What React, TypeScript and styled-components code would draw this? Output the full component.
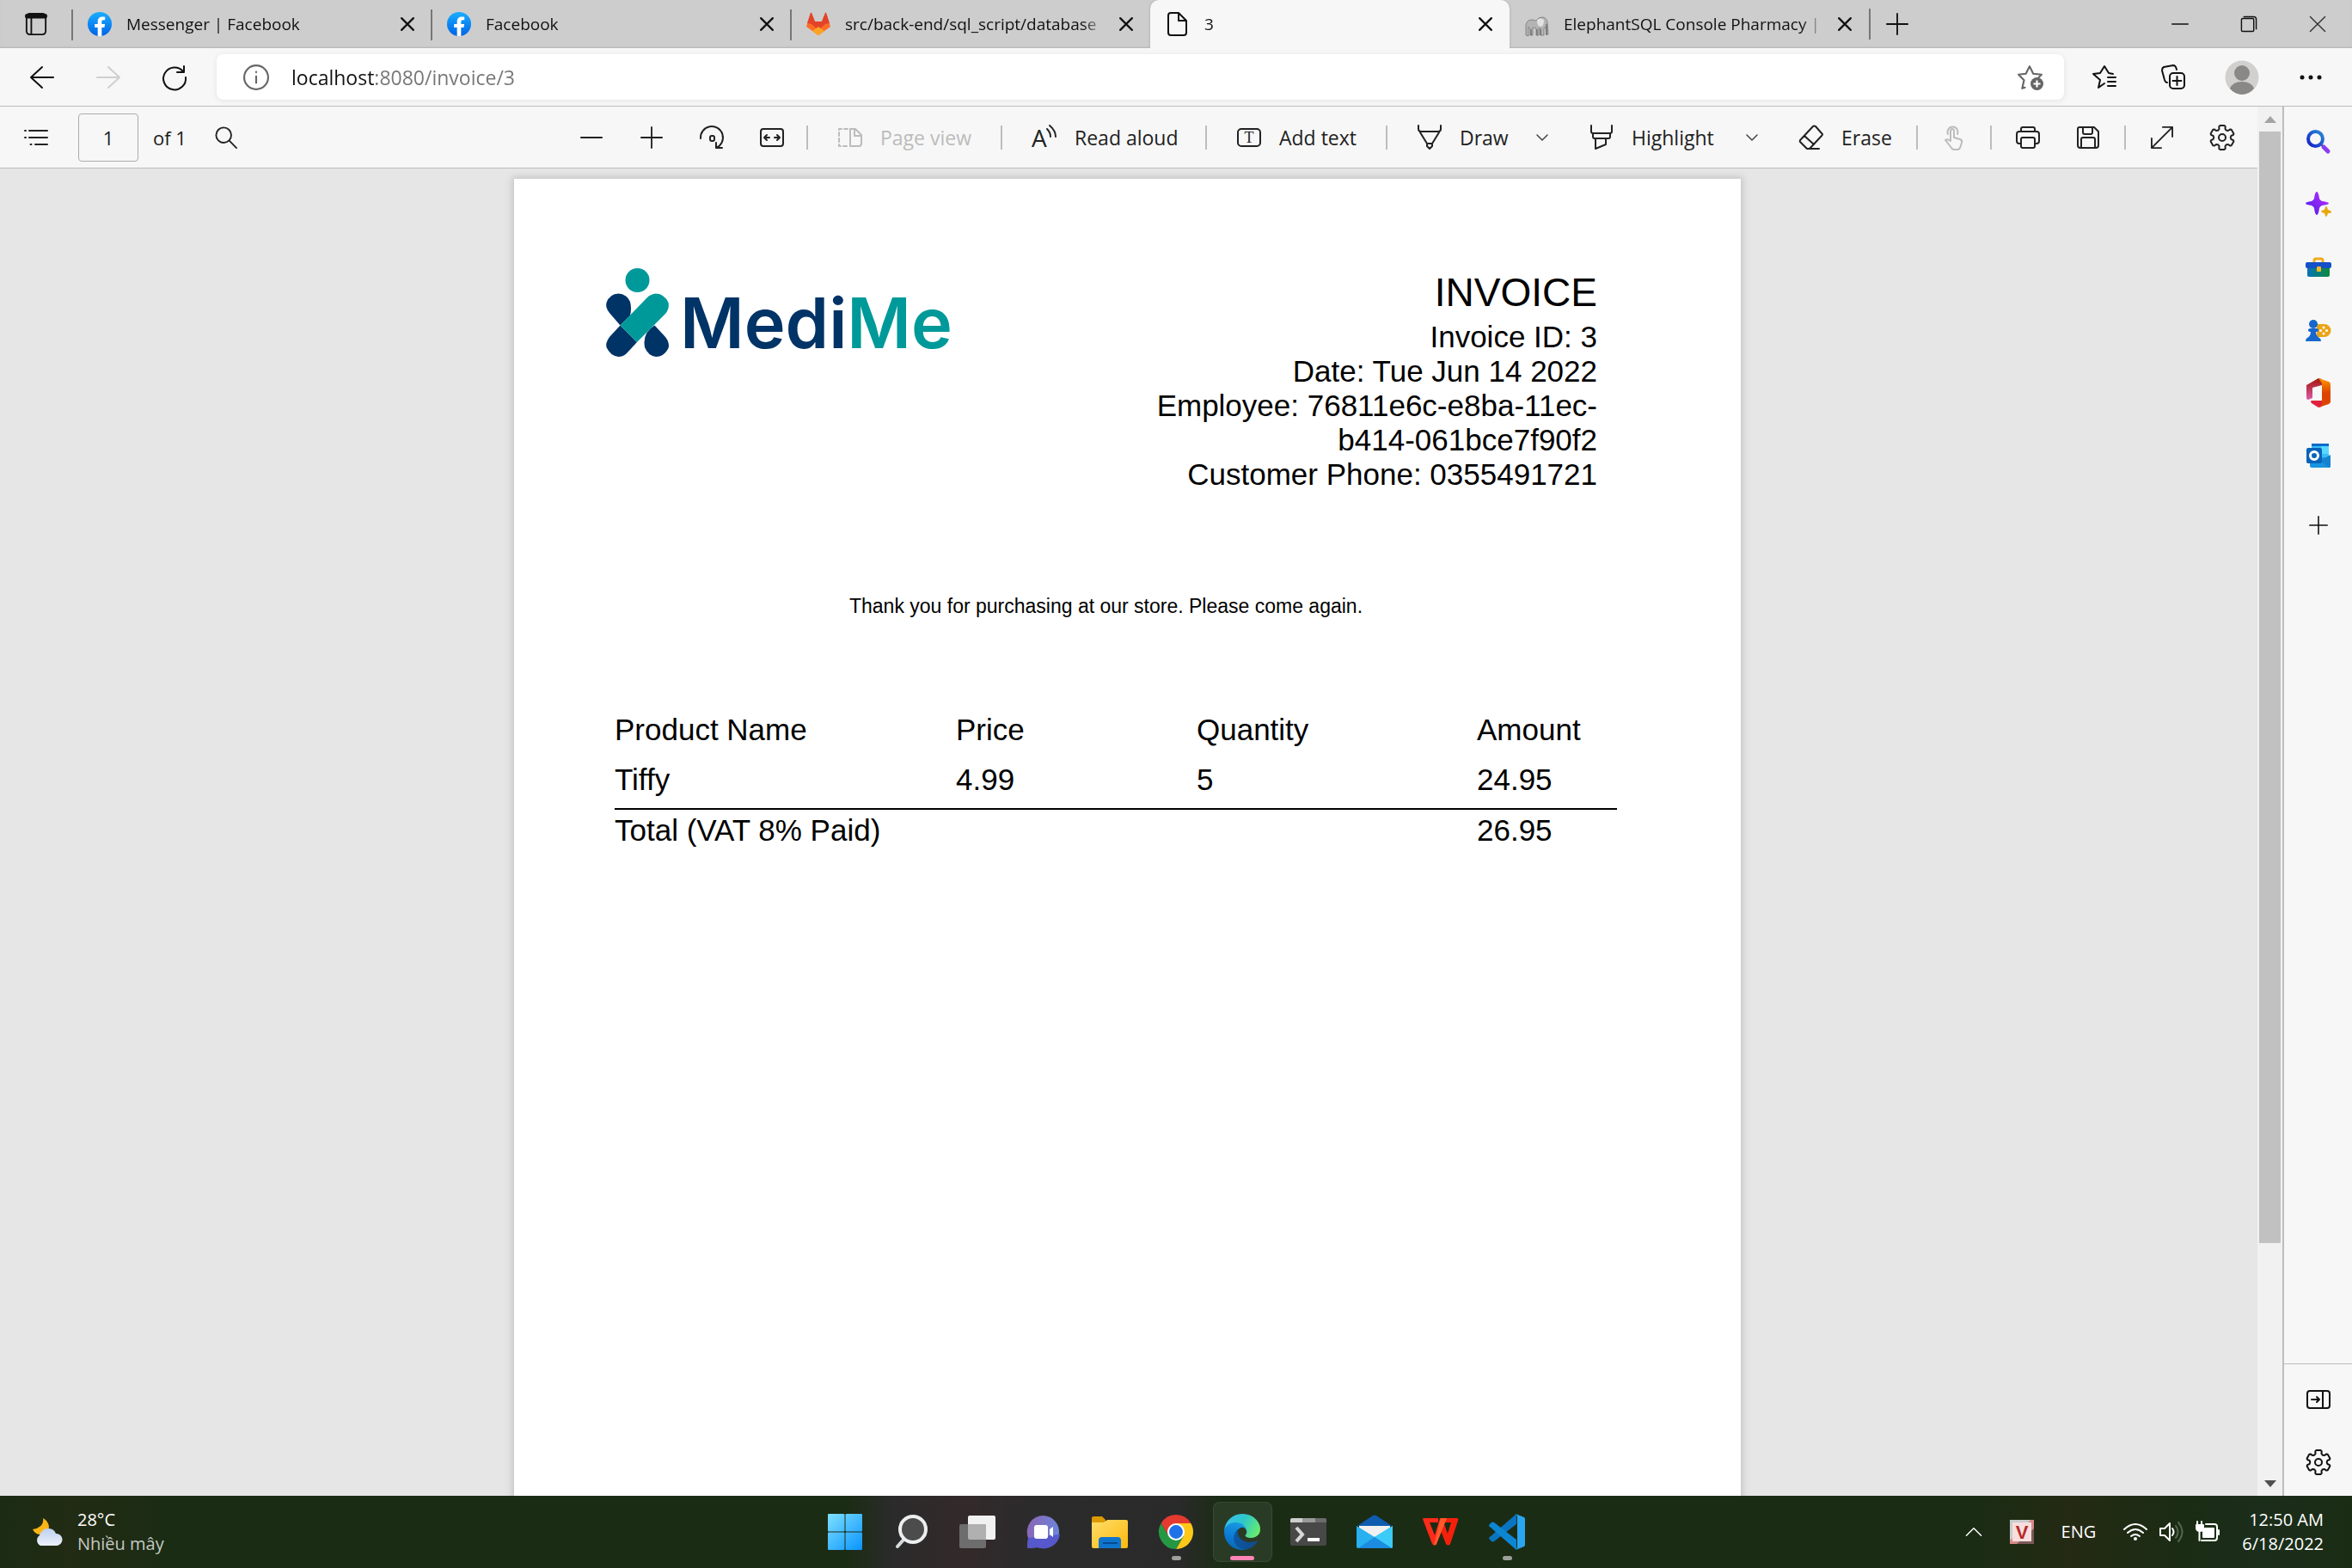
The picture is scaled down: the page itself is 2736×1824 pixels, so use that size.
import React from 'react';
import styled, { createGlobalStyle, css } from 'styled-components';

/* ---------- base ---------- */

const ui = `"Open Sans", "Noto Sans", sans-serif`;

const GlobalStyle = createGlobalStyle`
  *, *::before, *::after { box-sizing: border-box; }
  body { margin: 0; background: #e6e6e6; font-family: ${ui}; color: #1b1b1b; }
  button, input { font: inherit; color: inherit; }
`;

const Screen = styled.div`
  display: flex;
  flex-direction: column;
  height: 100vh;
  overflow: hidden;
`;

const plainButton = css`
  display: flex;
  align-items: center;
  justify-content: center;
  flex: none;
  padding: 0;
  border: 0;
  background: none;
`;

const Svg = styled.svg`
  display: block;
  flex: none;
  overflow: visible;
`;

type IconProps = {
  size?: number;
  color?: string;
  weight?: number;
  children: React.ReactNode;
};

const Line = ({ size = 28, color = '#222', weight = 2, children }: IconProps) => (
  <Svg
    width={size}
    height={size}
    viewBox="0 0 28 28"
    fill="none"
    stroke={color}
    strokeWidth={weight}
    strokeLinecap="round"
    strokeLinejoin="round"
    aria-hidden="true"
  >
    {children}
  </Svg>
);

/* ---------- tab strip ---------- */

const TabStrip = styled.header`
  display: flex;
  flex: none;
  height: 56px;
  background: #cdcdcd;
  box-shadow: inset 0 -2px 2px -1px #b2b2b2;
`;

const TabMenu = styled.button`
  ${plainButton}
  width: 84px;
`;

const TabBox = styled.div<{ $active?: boolean; $bare?: boolean }>`
  display: flex;
  align-items: center;
  flex: 0 1 418px;
  min-width: 0;
  padding: 0 20px 0 18px;
  position: relative;
  ${p =>
    p.$active
      ? css`
          background: #f7f7f7;
          border-radius: 10px 10px 0 0;
          box-shadow: 0 0 3px #a5a5a5;
          clip-path: inset(0 -4px 0 -4px);
        `
      : css`
          &::before {
            content: '';
            position: absolute;
            left: -1px;
            top: 11px;
            width: 2px;
            height: 36px;
            background: ${p.$bare ? 'transparent' : '#777'};
          }
        `}
`;

const TabLabel = styled.button`
  ${plainButton}
  flex: 1;
  min-width: 0;
  gap: 17px;
  justify-content: flex-start;
  font-size: 19px;
  line-height: 28px;
  color: #111;
`;

const TabText = styled.span`
  flex: 1;
  min-width: 0;
  overflow: hidden;
  white-space: nowrap;
  text-align: left;
  mask-image: linear-gradient(to left, transparent 0, #000 28px);
`;

const TabClose = styled.button`
  ${plainButton}
  width: 16px;
  height: 28px;
  margin-left: 15px;
`;

const NewTab = styled.button`
  ${plainButton}
  width: 64px;
  border-left: 2px solid #777;
  height: 36px;
  align-self: center;
`;

const WindowButtons = styled.div`
  display: flex;
  margin-left: auto;
`;

const WindowButton = styled.button`
  ${plainButton}
  width: 80px;
`;

const CloseIcon = () => (
  <Line size={16} color="#111" weight={4}>
    <path d="M2 2L26 26M26 2L2 26" />
  </Line>
);

const FacebookIcon = () => (
  <Svg width="28" height="28" viewBox="0 0 36 36" aria-hidden="true">
    <defs>
      <linearGradient id="fb" x1="0" y1="0" x2="0" y2="1">
        <stop offset="0" stopColor="#19aeff" />
        <stop offset="1" stopColor="#0062e6" />
      </linearGradient>
    </defs>
    <circle cx="18" cy="18" r="18" fill="url(#fb)" />
    <path
      fill="#fff"
      d="M25 23l.8-5H21v-3.500c0-1.400.5-2.500 2.700-2.500H26V7.400c-1.300-.2-2.700-.4-4-.4-4.100 0-7 2.500-7 7v4h-4.500v5H15v12.700c1 .2 2 .3 3 .3s2-.1 3-.3V23h4z"
    />
  </Svg>
);

const GitlabIcon = () => (
  <Svg width="28" height="28" viewBox="0 0 28 28" aria-hidden="true">
    <path d="M0 17L5 1q.5-1 1 0l4 10h8l4-10q.5-1 1 0l5 16-14 10z" fill="#fc6d26" />
    <path d="M5 1q.5-1 1 0l4 10h8l4-10q.5-1 1 0l4 12-5 1-8 7-8-7-5-1z" fill="#e24329" />
    <path d="M7 22l7-5 7 5-7 5.500z" fill="#fca326" />
  </Svg>
);

const PageIcon = () => (
  <Line color="#111" weight={2}>
    <path d="M6 1h9l9 9v14q0 3-3 3H6q-3 0-3-3V4q0-3 3-3zM15 1v9h9" />
  </Line>
);

const ElephantIcon = () => (
  <Svg width="28" height="28" viewBox="0 0 28 28" aria-hidden="true">
    <path
      d="M1 27V15q1-6 7-6l5 1q2-4 7-4 5 0 6 6l1 14h-2l-1-9-2 2v8h-4v-8h-2v8h-3v-8l-4-1v9H6v-7l-2-3v11z"
      fill="#b4b4b4"
      stroke="#858585"
      strokeWidth="1"
    />
    <path d="M14 9q0 8 4 8t4-8q-4-3-8 0z" fill="#e2e2e2" />
    <path d="M7 20v7M14 20v7M18 20v7M25 14v13" stroke="#5a5a5a" fill="none" />
  </Svg>
);

const tabs = [
  { title: 'Messenger | Facebook', icon: <FacebookIcon /> },
  { title: 'Facebook', icon: <FacebookIcon /> },
  { title: 'src/back-end/sql_script/database', icon: <GitlabIcon /> },
  { title: '3', icon: <PageIcon />, active: true },
  { title: 'ElephantSQL Console Pharmacy |', icon: <ElephantIcon />, bare: true },
];

/* ---------- address row ---------- */

const AddressRow = styled.nav`
  display: flex;
  align-items: center;
  flex: none;
  height: 68px;
  padding: 0 8px 0 10px;
  background: #f7f7f7;
  border-bottom: 1px solid #bdbdbd;
`;

const NavButton = styled.button<{ $wide?: boolean }>`
  ${plainButton}
  width: ${p => (p.$wide ? 80 : 77)}px;
  height: 56px;
`;

const AddressBox = styled.div`
  display: flex;
  align-items: center;
  flex: 1;
  min-width: 0;
  height: 53px;
  margin: 0 7px 0 11px;
  padding: 0 24px 0 31px;
  gap: 26px;
  border-radius: 8px;
  background: #fff;
  box-shadow: 0 1px 6px #e2e2e2;
`;

const AddressInput = styled.input`
  flex: 1;
  min-width: 0;
  height: 40px;
  padding: 0;
  border: 0;
  outline: 0;
  font-size: 23px;
  line-height: 32px;
  color: #111;
  background: linear-gradient(90deg, #111 97px, #757575 97px);
  background-clip: text;
  -webkit-background-clip: text;
  -webkit-text-fill-color: transparent;
`;

const BareButton = styled.button`
  ${plainButton}
`;

/* ---------- body ---------- */

const Body = styled.div`
  display: flex;
  flex: 1;
  min-height: 0;
`;

const Viewer = styled.section`
  display: flex;
  flex-direction: column;
  flex: 1;
  min-width: 0;
`;

const PdfBar = styled.div`
  display: flex;
  align-items: center;
  flex: none;
  height: 72px;
  padding: 0 13px 0 7px;
  background: #f7f7f7;
  border-bottom: 1px solid #bdbdbd;
`;

const ToolGroup = styled.div<{ $after?: number }>`
  display: flex;
  align-items: center;
  padding-right: ${p => p.$after ?? 0}px;
`;

const ToolsRight = styled(ToolGroup)`
  margin-left: auto;
`;

const PageInput = styled.input`
  width: 70px;
  height: 56px;
  margin: 0 17px 0 14px;
  border: 1px solid #ababab;
  border-radius: 4px;
  background: #f7f7f7;
  text-align: center;
  font-size: 22px;
`;

const PageTotal = styled.label`
  font-size: 22px;
  line-height: 32px;
  margin-right: 11px;
`;

const Tool = styled.button<{ $width?: number; $dim?: boolean }>`
  ${plainButton}
  width: ${p => p.$width ?? 70}px;
  height: 56px;
  color: ${p => (p.$dim ? '#bcbcbc' : '#222')};
`;

const LabelTool = styled(Tool)`
  justify-content: flex-start;
  padding-left: 35px;
  gap: 21px;
  font-size: 23px;
  line-height: 32px;
  white-space: nowrap;
`;

const Divider = styled.span`
  flex: none;
  width: 2px;
  height: 28px;
  background: #bdbdbd;
`;

const PaperArea = styled.main`
  flex: 1;
  min-height: 0;
  overflow: hidden;
  display: flex;
  justify-content: center;
  padding: 12px 3px 0 0;
  background: #e6e6e6;
`;

const Paper = styled.article`
  width: 1427px;
  min-height: 2020px;
  padding: 104px 143px 0 107px;
  background: #fff;
  color: #000;
  box-shadow: 0 0 8px 2px #c2c2c2;
  font-family: 'Liberation Sans', Arial, sans-serif;
  font-size: 35px;
  line-height: 40px;
`;

const PaperHead = styled.div`
  display: flex;
  justify-content: space-between;
  padding-right: 24px;
`;

const Brand = styled.div`
  display: flex;
  align-items: flex-start;
  gap: 12px;
`;

const BrandName = styled.div`
  padding-top: 14px;
  font-family: Inter, sans-serif;
  font-size: 81px;
  font-weight: 600;
  line-height: 100px;
  color: #003366;
`;

const BrandAccent = styled.span`
  color: #009999;
`;

const Details = styled.div`
  width: 560px;
  padding-top: 1px;
  text-align: right;
`;

const Title = styled.h1`
  margin: 0 0 5px;
  font-size: 46px;
  line-height: 54px;
  font-weight: 400;
`;

const Detail = styled.p`
  margin: 0;
`;

const Thanks = styled.p`
  margin: 120px 24px 111px 10px;
  font-size: 23px;
  line-height: 26px;
  text-align: center;
`;

const Items = styled.table`
  width: 1166px;
  margin-left: 10px;
  border-collapse: collapse;
  table-layout: fixed;

  th,
  td {
    padding: 0 0 18px;
    font-weight: 400;
    text-align: left;
    white-space: nowrap;
  }
  tbody td {
    padding-bottom: 13px;
    border-bottom: 2px solid #000;
  }
  tfoot td {
    padding-top: 4px;
  }
`;

const Col = styled.col<{ $width: number }>`
  width: ${p => p.$width}px;
`;

/* ---------- scrollbar and side bar ---------- */

const ScrollTrack = styled.div`
  display: flex;
  flex-direction: column;
  align-items: center;
  flex: none;
  width: 29px;
  background: #f1f1f1;
`;

const ScrollArrow = styled.button`
  ${plainButton}
  width: 29px;
  height: 29px;
`;

const ScrollSpace = styled.div`
  flex: 1;
  width: 25px;
`;

const ScrollThumb = styled.div`
  width: 25px;
  height: 83%;
  background: #c1c1c1;
`;

const SideBar = styled.aside`
  display: flex;
  flex-direction: column;
  flex: none;
  width: 81px;
  padding-top: 4px;
  border-left: 2px solid #bdbdbd;
  background: #f7f7f7;
`;

const SideButton = styled.button<{ $add?: boolean }>`
  ${plainButton}
  height: 73px;
  margin-top: ${p => (p.$add ? 8 : 0)}px;
`;

const SideFoot = styled.div`
  display: flex;
  flex-direction: column;
  margin-top: auto;
  padding: 4px 0 3px;
  border-top: 1px solid #bdbdbd;
`;

/* ---------- taskbar ---------- */

const TaskBar = styled.footer`
  display: grid;
  grid-template-columns: 1fr auto 1fr;
  align-items: center;
  flex: none;
  height: 84px;
  color: #fff;
  font-size: 20px;
  line-height: 28px;
  background: linear-gradient(
    90deg,
    #1b2c14 0,
    #222b14 3%,
    #1b2c14 7%,
    #1b2c14 36%,
    #2b2b2b 38%,
    #33292a 41%,
    #2b2b2c 44%,
    #2a2a2b 50%,
    #1b2c14 52%,
    #1b2c14 84%,
    #242a14 88%,
    #1b2c14 93%,
    #1b2e1b 96%,
    #1b2c14 100%
  );
`;

const Weather = styled.button`
  ${plainButton}
  justify-self: start;
  padding-left: 36px;
  gap: 16px;
  text-align: left;
`;

const Stack = styled.span`
  display: flex;
  flex-direction: column;
`;

const Muted = styled.span`
  color: #c4c9c2;
`;

const Apps = styled.div`
  display: flex;
  gap: 8px;
`;

const AppButton = styled.button<{ $state?: 'open' | 'active' }>`
  ${plainButton}
  position: relative;
  width: 69px;
  height: 70px;
  border-radius: 8px;
  ${p =>
    p.$state === 'active' &&
    css`
      background: #2a3b25;
      box-shadow: inset 0 0 0 1px #384833;
    `}
  ${p =>
    p.$state &&
    css`
      &::after {
        content: '';
        position: absolute;
        bottom: 2px;
        width: ${p.$state === 'active' ? 28 : 11}px;
        height: 5px;
        border-radius: 3px;
        background: ${p.$state === 'active' ? '#ff85b5' : '#9c9f9a'};
      }
    `}
`;

const Tray = styled.div`
  display: flex;
  align-items: center;
  justify-self: end;
  padding-right: 33px;
`;

const TrayButton = styled.button<{ $gap?: number }>`
  ${plainButton}
  margin-right: ${p => p.$gap ?? 14}px;
`;

const Clock = styled.time`
  display: flex;
  flex-direction: column;
  text-align: right;
  margin-left: 12px;
`;

/* ---------- drawings ---------- */

const gearPath = (() => {
  const pts: string[] = [];
  for (let k = 0; k < 6; k++) {
    const base = k * 60 - 90;
    [[-27, 9.8], [-19, 10.6], [-16, 13.4], [-11, 14.2], [11, 14.2], [16, 13.4], [19, 10.6], [27, 9.8]].forEach(([a, r]) => {
      const t = ((base + a) * Math.PI) / 180;
      pts.push(`${(14 + r * Math.cos(t)).toFixed(1)} ${(14 + r * Math.sin(t)).toFixed(1)}`);
    });
  }
  return `M${pts.join('L')}Z`;
})();

const Gear = ({ color = '#222' }: { color?: string }) => (
  <Line color={color}>
    <path d={gearPath} />
    <circle cx="14" cy="14" r="4" />
  </Line>
);

const Chevron = ({ color = '#444' }: { color?: string }) => (
  <Line size={14} color={color} weight={3}>
    <path d="M2 8l12 12L26 8" />
  </Line>
);

const BrandMark = () => (
  <Svg width="74" height="104" viewBox="0 0 74 104" aria-hidden="true">
    <circle cx="36.500" cy="14" r="14" fill="#099" />
    <path d="M16.500 66.500L4 52Q-1 46 0.500 40Q4 30 14.500 29.500Q24 30 28 39Q30 47 28 55Z" fill="#036" />
    <path d="M56.500 66.500L69 80Q75 88 72 94Q67 103 58 103Q49 102 45 92Q42 75 56.500 66.500Z" fill="#036" />
    <path d="M16.500 66.500L4 80Q-1 87 0.500 92Q5 102 14.500 103Q20 103 24 99L36 86Z" fill="#036" />
    <path d="M16.500 66.500L48 34Q52 30 58 29.500Q68 30 72.500 40Q74 47 69 53L36 86Z" fill="#099" />
  </Svg>
);

const SearchColor = () => (
  <Svg width="28" height="28" viewBox="0 0 28 28" aria-hidden="true">
    <defs>
      <linearGradient id="se" x1="1" y1="0" x2="0" y2="1">
        <stop offset="0" stopColor="#2a8ad8" />
        <stop offset="1" stopColor="#1420c8" />
      </linearGradient>
    </defs>
    <path d="M16.500 16.500l4 4" stroke="#444" strokeWidth="2" />
    <circle cx="10.500" cy="10.500" r="8.500" fill="none" stroke="url(#se)" strokeWidth="4" />
    <path d="M20 20l5 5" stroke="#8a3cf0" strokeWidth="5" strokeLinecap="round" />
  </Svg>
);

const Sparkle = () => (
  <Svg width="30" height="30" viewBox="0 0 30 30" aria-hidden="true">
    <defs>
      <linearGradient id="sp" x1="0" y1="1" x2="1" y2="0">
        <stop offset="0" stopColor="#4a1ce8" />
        <stop offset="1" stopColor="#c030ff" />
      </linearGradient>
    </defs>
    <path d="M13 0q2 0 3 8 1 2 3 3 8 1 8 2.500T19 16q-2 1-3 3-1 8-3 8t-3-8q-1-2-3-3-7-1-7-2.500T7 11q2-1 3-3 1-8 3-8z" fill="url(#sp)" />
    <path d="M24 17q1 0 2 4 4 1 4 2.500T26 25q-1 4-2 4t-2-4q-4-1-4-2t4-2q1-4 2-4z" fill="#e8a80c" />
  </Svg>
);

const Toolbox = () => (
  <Svg width="30" height="30" viewBox="0 0 30 30" aria-hidden="true">
    <defs>
      <linearGradient id="tb" x1="0" y1="0" x2="1" y2="0">
        <stop offset="0" stopColor="#0a72b8" />
        <stop offset="1" stopColor="#0b8a3c" />
      </linearGradient>
    </defs>
    <path d="M10 10V7q0-2 2-2h6q2 0 2 2v3" fill="none" stroke="#efaa1c" strokeWidth="3" />
    <path d="M2 14h26v10q0 2-2 2H4q-2 0-2-2z" fill="url(#tb)" />
    <rect y="9" width="30" height="7" rx="2" fill="#1450c8" />
    <rect x="13" y="14" width="5" height="6" rx="1" fill="#f5b822" />
  </Svg>
);

const Games = () => (
  <Svg width="30" height="30" viewBox="0 0 30 30" aria-hidden="true">
    <path d="M13 8h9a7 7 0 0 1 0 15h-9z" fill="#eaa416" />
    <g fill="#fff">
      <circle cx="21" cy="12" r="1.500" />
      <circle cx="21" cy="19" r="1.500" />
      <circle cx="17.500" cy="15.500" r="1.500" />
      <circle cx="24.500" cy="15.500" r="1.500" />
    </g>
    <circle cx="9" cy="8" r="5" fill="#1767cc" />
    <path d="M6 13h6q3 0 3 2t-3 2q0 5 4 7 2 1 2 4H0q0-3 2-4 4-2 4-7-3 0-3-2t3-2z" fill="#1767cc" />
  </Svg>
);

const Office = () => (
  <Svg width="30" height="34" viewBox="0 0 30 34" aria-hidden="true">
    <defs>
      <linearGradient id="of" x1="0" y1="0" x2="0" y2="1">
        <stop offset="0" stopColor="#a3140c" />
        <stop offset="1" stopColor="#e05aa8" />
      </linearGradient>
      <linearGradient id="og" x1="0" y1="0" x2="0" y2="1">
        <stop offset="0" stopColor="#ff9a00" />
        <stop offset="0.500" stopColor="#dc4400" />
      </linearGradient>
    </defs>
    <path d="M1 8L15 0l4 1v7L8 11v12l-5 2q-2 0-2-3z" fill="url(#of)" />
    <path d="M7 26h12v7l-4 1-8-5q-2-2 0-3z" fill="#e0203c" />
    <path d="M15 0l12 4q2 1 2 3v20q0 2-2 3l-12 4 4-4V6z" fill="url(#og)" />
  </Svg>
);

const Outlook = () => (
  <Svg width="30" height="30" viewBox="0 0 30 30" aria-hidden="true">
    <path d="M7 1h20v18H7z" fill="#38bdf5" />
    <path d="M7 1h20v3H7z" fill="#0a6cc8" />
    <path d="M18 4h9v9h-9z" fill="#57d8ff" />
    <path d="M5 17h24v10q0 2-2 2H7q-2 0-2-2z" fill="#1a94e0" />
    <path d="M29 14v13q0 2-2 2L17 21z" fill="#1482d0" />
    <rect x="1" y="6" width="18" height="18" rx="2" fill="#0a63b8" />
    <circle cx="10" cy="15" r="4.500" fill="none" stroke="#fff" strokeWidth="3" />
  </Svg>
);

const Plus = ({ size = 24, color = '#111', weight = 2 }) => (
  <Line size={size} color={color} weight={weight}>
    <path d="M14 1v26M1 14h26" />
  </Line>
);

const WindowsIcon = () => (
  <Svg width="40" height="42" viewBox="0 0 40 42" aria-hidden="true">
    <defs>
      <linearGradient id="wi" gradientUnits="userSpaceOnUse" x1="0" y1="0" x2="40" y2="42">
        <stop offset="0" stopColor="#7fe0ff" />
        <stop offset="1" stopColor="#0894ff" />
      </linearGradient>
    </defs>
    <g fill="url(#wi)">
      <rect width="19.500" height="20.500" rx="1" />
      <rect x="20.500" width="19.500" height="20.500" rx="1" />
      <rect y="21.500" width="19.500" height="20.500" rx="1" />
      <rect x="20.500" y="21.500" width="19.500" height="20.500" rx="1" />
    </g>
  </Svg>
);

const TaskSearch = () => (
  <Svg width="40" height="40" viewBox="0 0 40 40" aria-hidden="true">
    <path d="M12 28L4 37" stroke="#d5dade" strokeWidth="4" strokeLinecap="round" />
    <circle cx="22" cy="17" r="15" fill="#555" fillOpacity="0.800" stroke="#eceef0" strokeWidth="4" />
  </Svg>
);

const TaskView = () => (
  <Svg width="42" height="40" viewBox="0 0 42 40" aria-hidden="true">
    <rect x="10" y="1" width="32" height="28" rx="2" fill="#f1f1f1" />
    <rect y="11" width="31" height="28" rx="2" fill="#6d6d6d" />
    <path d="M10 11h20q1 0 1 1v17H12q-2 0-2-2z" fill="#b0b0b0" />
  </Svg>
);

const Chat = () => (
  <Svg width="40" height="40" viewBox="0 0 40 40" aria-hidden="true">
    <defs>
      <linearGradient id="ch" x1="0" y1="0.300" x2="1" y2="0.500">
        <stop offset="0" stopColor="#8c66b4" />
        <stop offset="1" stopColor="#6a86dc" />
      </linearGradient>
    </defs>
    <path d="M20 1a19 19 0 1 1-7 37l-10 1q-2 0-2-2l1-10A19 19 0 0 1 20 1z" fill="url(#ch)" />
    <path d="M2 27l37-4A19 19 0 0 1 13 38L3 39q-2 0-2-2z" fill="#5658cc" />
    <rect x="9" y="12" width="16" height="16" rx="3" fill="#fff" />
    <path d="M27 17l4-3v12l-4-3z" fill="#fff" />
  </Svg>
);

const Explorer = () => (
  <Svg width="42" height="40" viewBox="0 0 42 40" aria-hidden="true">
    <defs>
      <linearGradient id="ex" x1="0" y1="0" x2="1" y2="1">
        <stop offset="0" stopColor="#ffdd6b" />
        <stop offset="1" stopColor="#fcba0c" />
      </linearGradient>
    </defs>
    <path d="M0 4q0-2 2-2h10l4 4v8H0z" fill="#dd9a00" />
    <path d="M0 9h14l4-3h22q2 0 2 2v29q0 2-2 2H2q-2 0-2-2z" fill="url(#ex)" />
    <path d="M8 39V30q0-4 4-4h18q4 0 4 4v9z" fill="#0f74cc" />
    <path d="M13 33h17" stroke="#074a90" strokeWidth="2" />
  </Svg>
);

const Chrome = () => (
  <Svg width="40" height="40" viewBox="0 0 48 48" aria-hidden="true">
    <path d="M13.600 30L3.210 12A24 24 0 0 1 44.780 12H24z" fill="#e53a30" />
    <path d="M24 12h20.780A24 24 0 0 1 24 48l10.390-18z" fill="#fdc818" />
    <path d="M34.390 30L24 48A24 24 0 0 1 3.210 12L13.600 30z" fill="#269844" />
    <circle cx="24" cy="24" r="12" fill="#fff" />
    <circle cx="24" cy="24" r="9.500" fill="#1f72e8" />
  </Svg>
);

const Edge = () => (
  <Svg width="42" height="42" viewBox="0 0 256 256" aria-hidden="true">
    <defs>
      <linearGradient id="e1" x1="0" y1="0" x2="1" y2="0">
        <stop offset="0" stopColor="#0c59a4" />
        <stop offset="1" stopColor="#114a8b" />
      </linearGradient>
      <linearGradient id="e2" x1="0.600" y1="0" x2="0.300" y2="1">
        <stop offset="0" stopColor="#1b9de2" />
        <stop offset="0.600" stopColor="#0a7ad4" />
        <stop offset="1" stopColor="#0667ae" />
      </linearGradient>
      <linearGradient id="e3" x1="0" y1="0.200" x2="1" y2="0.600">
        <stop offset="0" stopColor="#35c1f1" />
        <stop offset="0.500" stopColor="#2ec7c8" />
        <stop offset="1" stopColor="#66eb6e" />
      </linearGradient>
    </defs>
    <path fill="url(#e1)" d="M231 190.500c-3.400 1.800-6.900 3.400-10.500 4.700a101.800 101.800 0 0 1-35.900 6.500c-47.300 0-88.500-32.500-88.500-74.300 0-11.300 6.300-21.800 16.200-27.400-42.800 1.800-53.800 46.400-53.800 72.500 0 73.900 68.100 81.400 82.800 81.400 7.900 0 19.800-2.300 27-4.600l1.300-.4a128.300 128.300 0 0 0 66.600-52.800 4 4 0 0 0-5.300-5.600z" />
    <path fill="url(#e2)" d="M105.700 241.400a79.200 79.200 0 0 1-22.700-21.300 80.700 80.700 0 0 1 29.500-120c3.200-1.500 8.500-4.100 15.600-4a32.400 32.400 0 0 1 25.700 13 31.900 31.900 0 0 1 6.300 18.700c0-.2 24.500-79.600-80-79.600-43.900 0-80 41.700-80 78.200a130.200 130.200 0 0 0 12.100 56 128 128 0 0 0 156.400 67 75.500 75.500 0 0 1-62.800-8z" />
    <path fill="url(#e3)" d="M152.300 148.900c-.8 1-3.300 2.500-3.300 5.700 0 2.600 1.700 5.100 4.700 7.200 14.400 10 41.500 8.700 41.600 8.700a59.600 59.600 0 0 0 30.300-8.300 61.400 61.400 0 0 0 30.400-52.900c.3-22.400-8-37.300-11.300-43.900C223.500 23.900 177.700 0 128 0A128 128 0 0 0 0 126.200c.5-36.500 36.800-66 80-66 3.500 0 23.500.3 42 10.100 16.300 8.600 24.900 18.900 30.800 29.200 6.200 10.700 7.300 24.100 7.300 29.500s-2.700 13.300-7.800 19.900z" />
  </Svg>
);

const Terminal = () => (
  <Svg width="42" height="34" viewBox="0 0 42 34" aria-hidden="true">
    <rect y="1" width="42" height="32" rx="2" fill="#484848" />
    <path d="M0 6V3q0-2 2-2h12v5z" fill="#cfcfcf" />
    <path d="M14 1h15v5H14z" fill="#999" />
    <path d="M29 1h11q2 0 2 2v3H29z" fill="#6c6c6c" />
    <path d="M7 12l7 8-7 8" fill="none" stroke="#d8d8d8" strokeWidth="4" />
    <rect x="20" y="24" width="14" height="4" fill="#fff" />
  </Svg>
);

const Mail = () => (
  <Svg width="42" height="40" viewBox="0 0 42 40" aria-hidden="true">
    <path d="M1 13L19 1q2-1 4 0l18 12z" fill="#0d5cb0" />
    <path d="M3 13h36v17H3z" fill="#f0f0f0" />
    <path d="M0 13l21 13 21-13v24q0 2-2 2H2q-2 0-2-2z" fill="#28b0f0" />
    <path d="M21 26l21-13v24q0 1-1 2z" fill="#3ccbf8" />
    <path d="M21 26l20 13H2z" fill="#1c8ce0" />
  </Svg>
);

const Wps = () => (
  <Svg width="42" height="34" viewBox="0 0 42 34" aria-hidden="true">
    <path d="M0 2q0-1 2-1h16v5H8l6 15 6-20h8L16 31q-2 3-5 0z" fill="#ff2a1a" />
    <path d="M24 1h16q2 0 1 3l-9 27q-2 3-5 0l-7-18 4-8 5 14 4-13h-9z" fill="#f5200c" />
    <path d="M21 1h7L16 31q-1 2-3 1z" fill="#ff5a2c" />
  </Svg>
);

const Code = () => (
  <Svg width="42" height="42" viewBox="0 0 42 42" aria-hidden="true">
    <path d="M32 0v12L6 32q-1 1-3 0l-2-2q-2-2 0-3z" fill="#0a74c0" />
    <path d="M32 42V30L6 10q-1-1-3 0l-2 2q-2 2 0 3z" fill="#0c86d2" />
    <path d="M31 0l10 4q1 1 1 2v30q0 1-1 2l-10 4q2-1 2-4V4q0-3-2-4z" fill="#2aa5f0" />
  </Svg>
);

const Moon = () => (
  <Svg width="38" height="34" viewBox="0 0 38 34" aria-hidden="true">
    <defs>
      <linearGradient id="cl" x1="0" y1="0" x2="0" y2="1">
        <stop offset="0" stopColor="#bdd0f2" />
        <stop offset="1" stopColor="#eef0f8" />
      </linearGradient>
    </defs>
    <path d="M14 1q2 11-12 13 3 6 9 6 9 0 10-9Q20 4 14 1z" fill="#fbb515" />
    <path d="M11 33a7 7 0 0 1-1-12q3-8 10-8 7 0 9 6a7 7 0 0 1 1 14z" fill="url(#cl)" />
  </Svg>
);

const trayWhite = '#fff';

/* ---------- page ---------- */

export default function App() {
  return (
    <Screen>
      <GlobalStyle />

      <TabStrip>
        <TabMenu aria-label="Tab actions menu">
          <Line size={26} color="#111">
            <rect x="2" y="1" width="24" height="26" rx="4" />
            <path d="M3 4h22" strokeWidth="6" />
            <path d="M8 7v20" />
          </Line>
        </TabMenu>
        {tabs.map((t, i) => (
          <TabBox key={i} $active={t.active} $bare={t.bare}>
            <TabLabel>
              {t.icon}
              <TabText>{t.title}</TabText>
            </TabLabel>
            <TabClose aria-label="Close tab">
              <CloseIcon />
            </TabClose>
          </TabBox>
        ))}
        <NewTab aria-label="New tab">
          <Plus size={26} />
        </NewTab>
        <WindowButtons>
          <WindowButton aria-label="Minimize">
            <Line size={20} color="#111">
              <path d="M1 14h26" />
            </Line>
          </WindowButton>
          <WindowButton aria-label="Restore">
            <Line size={20} color="#111">
              <rect x="2" y="5" width="20" height="21" rx="2" />
              <path d="M6 2h16q4 0 4 4v16" />
            </Line>
          </WindowButton>
          <WindowButton aria-label="Close">
            <Line size={20} color="#333">
              <path d="M2 2l24 24M26 2L2 26" />
            </Line>
          </WindowButton>
        </WindowButtons>
      </TabStrip>

      <AddressRow>
        <NavButton aria-label="Back">
          <Line color="#111">
            <path d="M1 14h26M14 2L1 14l13 12" />
          </Line>
        </NavButton>
        <NavButton aria-label="Forward">
          <Line color="#cfcfcf">
            <path d="M1 14h26M14 2l13 12-13 12" />
          </Line>
        </NavButton>
        <NavButton aria-label="Refresh">
          <Line color="#111">
            <path d="M24 7A13 13 0 1 0 27 14M25 1v7h-8" />
          </Line>
        </NavButton>
        <AddressBox>
          <BareButton aria-label="Site information">
            <Line size={30} color="#666">
              <circle cx="14" cy="14" r="13" />
              <path d="M14 13v7M14 8v.5" />
            </Line>
          </BareButton>
          <AddressInput aria-label="Address" defaultValue="localhost:8080/invoice/3" />
          <BareButton aria-label="Add to favorites">
            <Line size={30} color="#666">
              <path d="M8 25l-3 1 2-9-6-6 8-1 4-8 4 8 9 1-3 3" />
              <circle cx="21" cy="21" r="7" fill="#666" stroke="none" />
              <path d="M21 18v6M18 21h6" stroke="#fff" />
            </Line>
          </BareButton>
        </AddressBox>
        <NavButton $wide aria-label="Favorites">
          <Line color="#111">
            <path d="M14 21l-7 5 2-9-8-7 8-1 5-8 5 8 5 1M18 14h9M18 19h9M18 24h9" />
          </Line>
        </NavButton>
        <NavButton $wide aria-label="Collections">
          <Line color="#111">
            <path d="M7 20q-2 0-3-3L1 6q0-3 2-4l11-2q3 0 4 5" />
            <rect x="10" y="9" width="17" height="18" rx="4" />
            <path d="M18.500 13v10M13.500 18h10" />
          </Line>
        </NavButton>
        <NavButton $wide aria-label="Profile">
          <Svg width="40" height="40" viewBox="0 0 40 40" aria-hidden="true">
            <circle cx="20" cy="20" r="19.500" fill="#d2d0ce" />
            <circle cx="20" cy="15" r="9" fill="#8a8886" />
            <path d="M6 33q3-8 14-8t14 8q-6 7-14 7T6 33z" fill="#8a8886" />
          </Svg>
        </NavButton>
        <NavButton $wide aria-label="Settings and more">
          <Line color="#111">
            <g fill="#111" stroke="none">
              <circle cx="4" cy="14" r="2.500" />
              <circle cx="14" cy="14" r="2.500" />
              <circle cx="24" cy="14" r="2.500" />
            </g>
          </Line>
        </NavButton>
      </AddressRow>

      <Body>
        <Viewer>
          <PdfBar>
            <ToolGroup>
              <Tool aria-label="Table of contents">
                <Line>
                  <path d="M6 6h21M6 14h21M13 22h14M1 6h1M1 14h1M7.500 22h1" />
                </Line>
              </Tool>
              <PageInput id="page" defaultValue="1" />
              <PageTotal htmlFor="page">of 1</PageTotal>
              <Tool aria-label="Find">
                <Line size={26}>
                  <circle cx="11" cy="11" r="9.500" />
                  <path d="M18 18l9 9" />
                </Line>
              </Tool>
            </ToolGroup>

            <ToolsRight>
              <ToolGroup $after={5}>
                <Tool aria-label="Zoom out">
                  <Line size={26}>
                    <path d="M1 14h26" />
                  </Line>
                </Tool>
                <Tool aria-label="Zoom in">
                  <Plus size={26} color="#222" />
                </Tool>
                <Tool aria-label="Rotate">
                  <Line>
                    <path d="M1 15A13 13 0 1 1 19 26M26 26h-7v-6" />
                    <rect x="12" y="12" width="5" height="6" rx="2" />
                  </Line>
                </Tool>
                <Tool aria-label="Fit to width">
                  <Line>
                    <rect x="1" y="4" width="26" height="20" rx="3" />
                    <path d="M11 14H5M8 11l-3 3 3 3M17 14h6M20 11l3 3-3 3" />
                  </Line>
                </Tool>
              </ToolGroup>
              <Divider />
              <LabelTool $width={224} $dim disabled>
                <Line color="#bcbcbc">
                  <path d="M11 4H1v20h10" strokeDasharray="4 3" />
                  <path d="M14 4h6l7 7v10q0 3-3 3H14zM19 4v8h8" />
                </Line>
                Page view
              </LabelTool>
              <Divider />
              <LabelTool $width={236}>
                <Line>
                  <text x="-1" y="25" fontFamily="Open Sans" fontSize="28" fill="#222" stroke="none">
                    A
                  </text>
                  <path d="M17 4q4 4 4 9M20 0q7 6 7 13" />
                </Line>
                Read aloud
              </LabelTool>
              <Divider />
              <LabelTool $width={208}>
                <Line>
                  <rect x="1" y="4" width="26" height="20" rx="4" />
                  <text x="14" y="20" textAnchor="middle" fontFamily="Liberation Serif" fontSize="18" fill="#222" stroke="none">
                    T
                  </text>
                </Line>
                Add text
              </LabelTool>
              <Divider />
              <LabelTool $width={160}>
                <Line>
                  <path d="M1 0v4q0 3 3 3h20q3 0 3-3V0M3 8l8 13h6l8-13M11 21v3l3 3 3-3v-3" />
                </Line>
                Draw
              </LabelTool>
              <Tool $width={40} aria-label="Draw options">
                <Chevron />
              </Tool>
              <LabelTool $width={204}>
                <Line>
                  <path d="M2 0v7q0 2 2 2h20q2 0 2-2V0M4 9v4q0 2 2 2h16q2 0 2-2V9M7 15v12l12-5v-7" />
                </Line>
                Highlight
              </LabelTool>
              <Tool $width={40} aria-label="Highlight options">
                <Chevron />
              </Tool>
              <LabelTool $width={171}>
                <Line>
                  <path d="M2 16L16 1q1-1 3 0l7 8q2 1 0 3L12 27H9l-8-8q-1-1 1-3zM6 12l11 10M11 27h12" />
                </Line>
                Erase
              </LabelTool>
              <Divider />
              <Tool $width={84} $dim disabled aria-label="Touch">
                <Line color="#bcbcbc">
                  <path d="M10 18V7q0-3 2-3t2 3v7l7 2q3 1 2 4l-2 6q-1 2-3 2h-4q-2 0-3-2l-7-9q2-2 6 1" />
                  <path d="M7 10a6 6 0 1 1 11 0" />
                </Line>
              </Tool>
              <Divider />
              <ToolGroup $after={14}>
                <Tool $width={84} aria-label="Print">
                  <Line>
                    <path d="M6 21H4q-3 0-3-3v-8q0-3 3-3h20q3 0 3 3v8q0 3-3 3h-2M6 7V4q0-2 2-2h12q2 0 2 2v3" />
                    <rect x="6" y="14" width="16" height="12" rx="2" />
                  </Line>
                </Tool>
                <Tool $width={56} aria-label="Save">
                  <Line>
                    <path d="M4 2h17l5 5v16q0 3-3 3H5q-3 0-3-3V4q0-2 2-2zM8 2v6q0 2 2 2h7q2 0 2-2V2M6 26V16q0-2 2-2h12q2 0 2 2v10" />
                  </Line>
                </Tool>
              </ToolGroup>
              <Divider />
              <Tool $width={84} aria-label="Full screen">
                <Line size={26}>
                  <path d="M2 26L26 2M15 1h12v12M1 15v12h12" />
                </Line>
              </Tool>
              <Tool $width={56} aria-label="Viewer settings">
                <Gear />
              </Tool>
            </ToolsRight>
          </PdfBar>

          <PaperArea>
            <Paper>
              <PaperHead>
                <Brand>
                  <BrandMark />
                  <BrandName>
                    Medi<BrandAccent>Me</BrandAccent>
                  </BrandName>
                </Brand>
                <Details>
                  <Title>INVOICE</Title>
                  <Detail>Invoice ID: 3</Detail>
                  <Detail>Date: Tue Jun 14 2022</Detail>
                  <Detail>Employee: 76811e6c-e8ba-11ec-b414-061bce7f90f2</Detail>
                  <Detail>Customer Phone: 0355491721</Detail>
                </Details>
              </PaperHead>
              <Thanks>Thank you for purchasing at our store. Please come again.</Thanks>
              <Items>
                <colgroup>
                  <Col $width={397} />
                  <Col $width={280} />
                  <Col $width={326} />
                  <Col $width={163} />
                </colgroup>
                <thead>
                  <tr>
                    <th>Product Name</th>
                    <th>Price</th>
                    <th>Quantity</th>
                    <th>Amount</th>
                  </tr>
                </thead>
                <tbody>
                  <tr>
                    <td>Tiffy</td>
                    <td>4.99</td>
                    <td>5</td>
                    <td>24.95</td>
                  </tr>
                </tbody>
                <tfoot>
                  <tr>
                    <td colSpan={3}>Total (VAT 8% Paid)</td>
                    <td>26.95</td>
                  </tr>
                </tfoot>
              </Items>
            </Paper>
          </PaperArea>
        </Viewer>

        <ScrollTrack>
          <ScrollArrow aria-label="Scroll up">
            <Svg width="14" height="8" viewBox="0 0 14 8">
              <path d="M7 0l7 8H0z" fill="#a3a3a3" />
            </Svg>
          </ScrollArrow>
          <ScrollSpace>
            <ScrollThumb />
          </ScrollSpace>
          <ScrollArrow aria-label="Scroll down">
            <Svg width="14" height="8" viewBox="0 0 14 8">
              <path d="M7 8L0 0h14z" fill="#505050" />
            </Svg>
          </ScrollArrow>
        </ScrollTrack>

        <SideBar>
          <SideButton aria-label="Search"><SearchColor /></SideButton>
          <SideButton aria-label="Discover"><Sparkle /></SideButton>
          <SideButton aria-label="Tools"><Toolbox /></SideButton>
          <SideButton aria-label="Games"><Games /></SideButton>
          <SideButton aria-label="Office"><Office /></SideButton>
          <SideButton aria-label="Outlook"><Outlook /></SideButton>
          <SideButton $add aria-label="Add to sidebar"><Plus size={22} /></SideButton>
          <SideFoot>
            <SideButton aria-label="Hide sidebar">
              <Line color="#111">
                <rect x="1" y="4" width="26" height="20" rx="3" />
                <path d="M19 4v20M6 14h9M12 11l3 3-3 3" />
              </Line>
            </SideButton>
            <SideButton aria-label="Settings"><Gear color="#111" /></SideButton>
          </SideFoot>
        </SideBar>
      </Body>

      <TaskBar>
        <Weather>
          <Moon />
          <Stack>
            <span>28°C</span>
            <Muted>Nhiều mây</Muted>
          </Stack>
        </Weather>
        <Apps>
          <AppButton aria-label="Start"><WindowsIcon /></AppButton>
          <AppButton aria-label="Search"><TaskSearch /></AppButton>
          <AppButton aria-label="Task view"><TaskView /></AppButton>
          <AppButton aria-label="Chat"><Chat /></AppButton>
          <AppButton aria-label="File Explorer"><Explorer /></AppButton>
          <AppButton $state="open" aria-label="Chrome"><Chrome /></AppButton>
          <AppButton $state="active" aria-label="Edge"><Edge /></AppButton>
          <AppButton aria-label="Terminal"><Terminal /></AppButton>
          <AppButton aria-label="Mail"><Mail /></AppButton>
          <AppButton aria-label="WPS Office"><Wps /></AppButton>
          <AppButton $state="open" aria-label="Visual Studio Code"><Code /></AppButton>
        </Apps>
        <Tray>
          <TrayButton $gap={32} aria-label="Hidden icons">
            <Line size={20} color={trayWhite}>
              <path d="M2 20l12-12 12 12" />
            </Line>
          </TrayButton>
          <TrayButton $gap={32} aria-label="Unikey">
            <Svg width="28" height="28" viewBox="0 0 28 28">
              <rect width="28" height="28" fill="#d78a8a" />
              <path d="M0 0h24L0 24z" fill="#c8cccc" />
              <path d="M28 28H8L28 10z" fill="#7d5a5a" />
              <rect x="3" y="3" width="22" height="22" fill="#f8dede" />
              <text x="14" y="22" textAnchor="middle" fontFamily="Liberation Sans" fontWeight="700" fontSize="22" fill="#b42a2a">
                V
              </text>
            </Svg>
          </TrayButton>
          <TrayButton $gap={32}>ENG</TrayButton>
          <TrayButton aria-label="Network">
            <Line color={trayWhite}>
              <path d="M1 11q13-12 26 0M5 15q9-8 18 0M9 19q5-4 10 0" />
              <circle cx="14" cy="22" r="2" fill="#fff" stroke="none" />
            </Line>
          </TrayButton>
          <TrayButton aria-label="Volume">
            <Line color={trayWhite}>
              <path d="M1 10v8h5l6 6V4l-6 6zM15 10q3 4 0 8" />
              <path d="M19 7q5 7 0 14M22 3q9 11 0 22" stroke="#56644f" />
            </Line>
          </TrayButton>
          <TrayButton aria-label="Battery">
            <Line color={trayWhite}>
              <path d="M2 2v4M7 2v4M4.500 12v12" />
              <path d="M1 6h8v3q0 4-4 4t-4-4zM11 10h10v10H9v-6z" fill="#fff" />
              <path d="M12 5h10q3 0 3 3v13q0 3-3 3H7M27 12v5" />
            </Line>
          </TrayButton>
          <Clock>
            <span>12:50 AM</span>
            <span>6/18/2022</span>
          </Clock>
        </Tray>
      </TaskBar>
    </Screen>
  );
}
